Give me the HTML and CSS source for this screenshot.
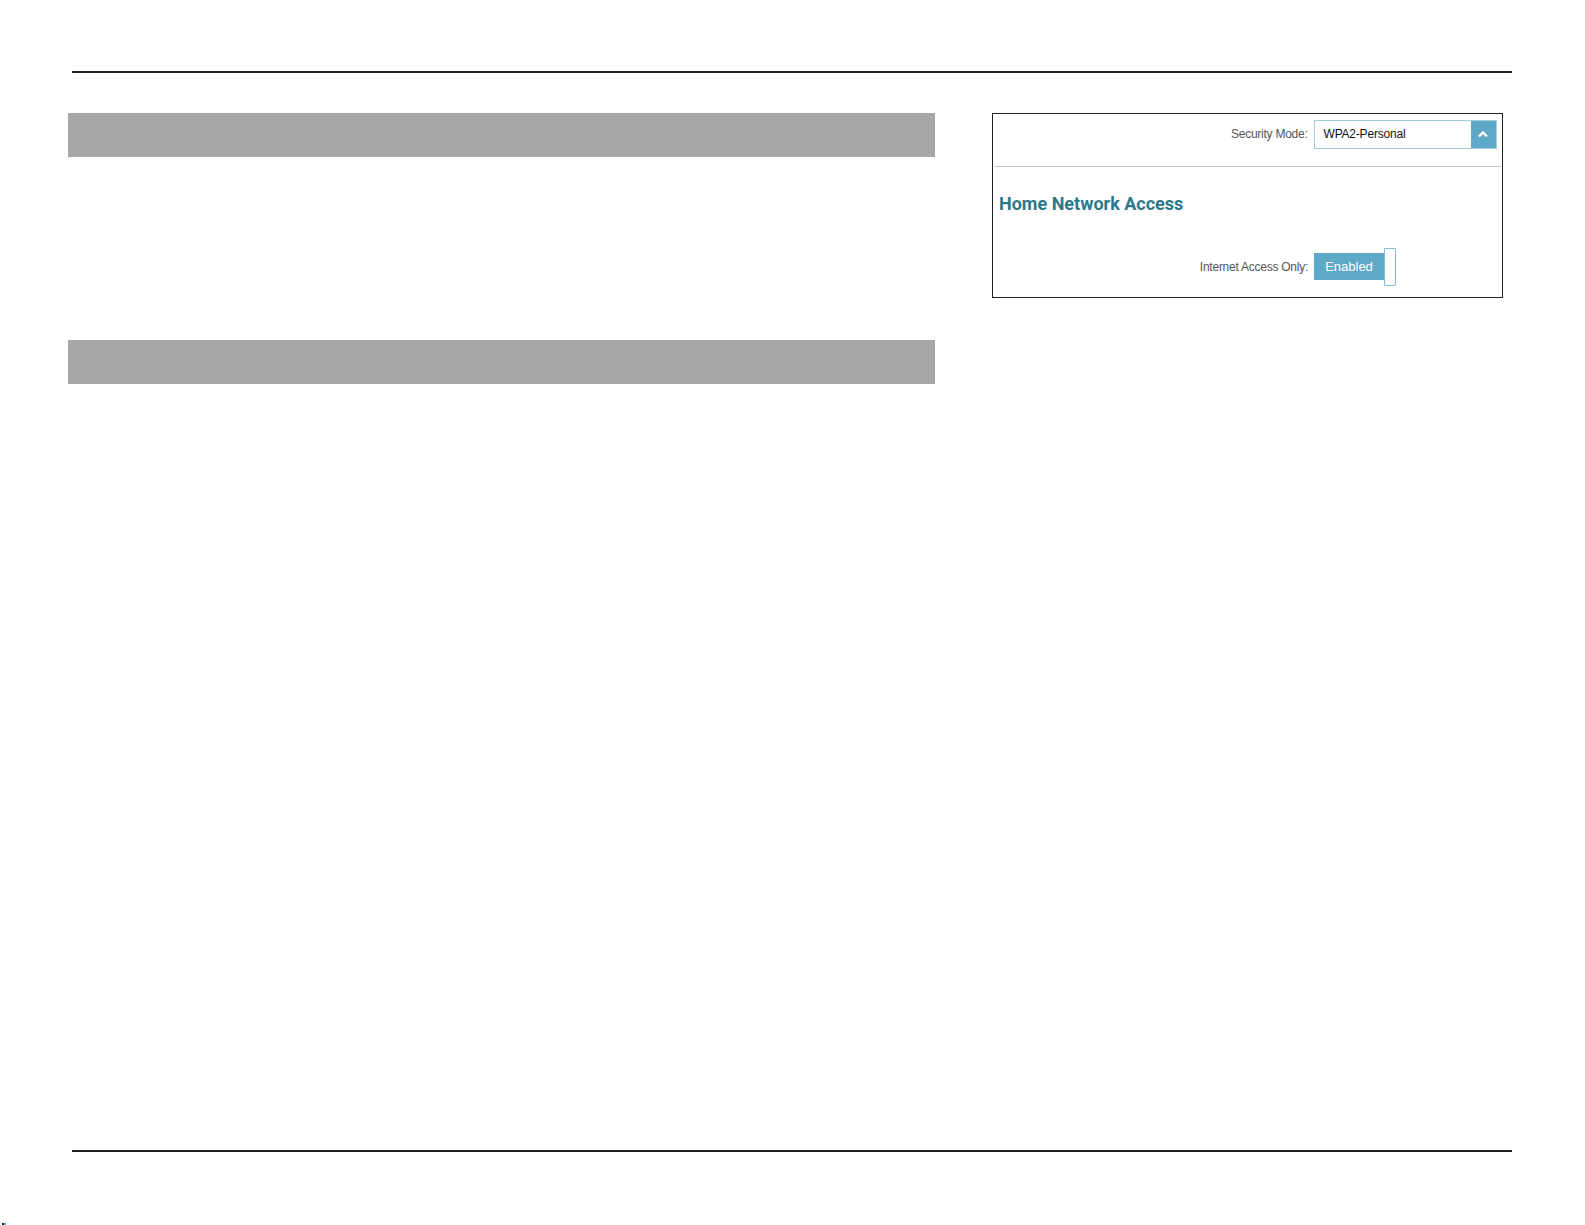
FILE: index.html
```html
<!DOCTYPE html>
<html>
<head>
<meta charset="utf-8">
<link rel="stylesheet" href="styles.css">
</head>
<body>
<div class="page">
  <div class="rule rule-top"></div>
  <div class="main">
    <div class="left">
      <div class="bar"></div>
      <div class="bar bar2"></div>
    </div>
    <div class="shot">
      <div class="row row-mode">
        <span class="label">Security Mode:</span>
        <div class="select">
          <span class="select-text">WPA2-Personal</span>
          <span class="select-btn">
            <svg width="12" height="8" viewBox="0 0 12 8"><path d="M2 6.5 L6 2.5 L10 6.5" fill="none" stroke="#fff" stroke-width="2.4"/></svg>
          </span>
        </div>
      </div>
      <div class="divider"></div>
      <h2 class="heading">Home Network Access</h2>
      <div class="row row-access">
        <span class="label">Internet Access Only:</span>
        <div class="toggle">
          <span class="toggle-on">Enabled</span>
          <span class="knob"></span>
        </div>
      </div>
    </div>
  </div>
  <div class="rule rule-bottom"></div>
  <div class="mark"><span class="mk1"></span><span class="mk2"></span></div>
</div>
</body>
</html>
```
FILE: styles.css
```css
html, body {
  margin: 0;
  padding: 0;
  background: #fff;
}
.page {
  position: relative;
  height: 1225px;
  display: flex;
  flex-direction: column;
  font-family: "Liberation Sans", Arial, sans-serif;
}
.rule {
  height: 2px;
  background: #231f20;
  margin-left: 72px;
  margin-right: 73px;
}
.rule-top {
  margin-top: 71px;
}
.rule-bottom {
  margin-top: auto;
  margin-bottom: 73px;
}
.main {
  display: flex;
  align-items: flex-start;
  padding-top: 40px;
  padding-left: 68px;
}
.left {
  width: 867px;
  display: flex;
  flex-direction: column;
}
.bar {
  height: 44px;
  background: #a7a7a6;
}
.bar2 {
  margin-top: 183px;
}
.shot {
  margin-left: 57px;
  width: 509px;
  height: 183px;
  border: 1.5px solid #231f20;
  display: flex;
  flex-direction: column;
}
.row {
  display: flex;
  align-items: center;
  justify-content: flex-end;
}
.label {
  font-size: 12px;
  color: #555;
  letter-spacing: -0.25px;
  margin-right: 6px;
}
.row-mode {
  padding-top: 5.5px;
  padding-right: 5.5px;
}
.select {
  width: 181px;
  height: 27px;
  border: 1px solid #9fcdd8;
  display: flex;
  align-items: center;
  justify-content: space-between;
}
.select-text {
  font-size: 12px;
  color: #111;
  padding-left: 9px;
  letter-spacing: -0.2px;
}
.select-btn {
  width: 25px;
  height: 27px;
  background: #5ea9c8;
  display: flex;
  align-items: center;
  justify-content: center;
}
.divider {
  margin-top: 17px;
  height: 1px;
  background: #c9c9c9;
  margin-left: 1px;
  margin-right: 1px;
}
.heading {
  margin: 26px 0 0 6px;
  font-family: Roboto, "Liberation Sans", sans-serif;
  font-weight: 700;
  font-size: 18px;
  color: #2c7789;
  line-height: 22px;
}
.row-access {
  margin-top: 33px;
  padding-right: 106px;
}
.toggle {
  display: flex;
  align-items: center;
}
.toggle-on {
  width: 70px;
  height: 27px;
  background: #5ea9c8;
  color: #fff;
  font-size: 13px;
  display: flex;
  align-items: center;
  justify-content: center;
}
.knob {
  width: 10px;
  height: 36px;
  border: 1px solid #7fbcd2;
  background: #fff;
  border-radius: 1px;
}
.mark {
  position: absolute;
  left: 2px;
  top: 1223px;
  display: flex;
}
.mk1 {
  width: 2px;
  height: 2px;
  background: #222;
}
.mk2 {
  width: 2px;
  height: 2px;
  background: #30c8d8;
}
```
